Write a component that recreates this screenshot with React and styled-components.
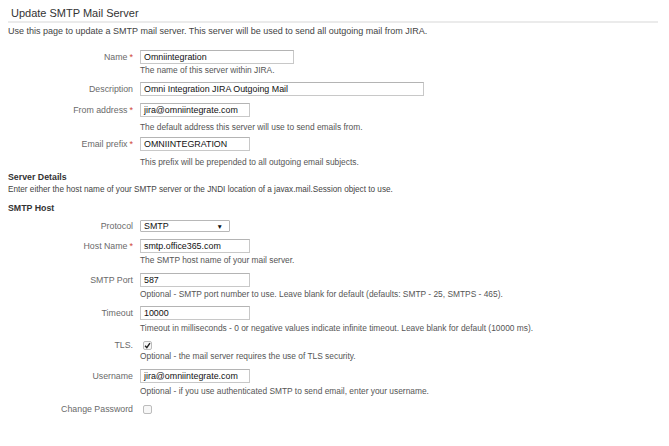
import React from 'react';
import styled, { createGlobalStyle } from 'styled-components';

const GlobalStyle = createGlobalStyle`
  html, body {
    margin: 0;
    padding: 0;
    background: #fff;
  }
  body {
    font-family: "Liberation Sans", Arial, sans-serif;
    color: #333;
  }
`;

const Page = styled.div`
  width: 669px;
  height: 446px;
  box-sizing: border-box;
  padding: 5px 11px 0 8px;
  overflow: hidden;
`;

const Title = styled.h2`
  margin: 0 0 0 3px;
  font-size: 11px;
  font-weight: normal;
  line-height: 16px;
  color: #333;
`;

const Rule = styled.div`
  height: 2px;
  background: #ebebeb;
`;

const Intro = styled.p`
  margin: 3px 0 0;
  font-size: 9px;
  line-height: 11px;
  color: #444;
  white-space: nowrap;
`;

const Row = styled.div`
  display: grid;
  grid-template-columns: 125px 1fr;
  column-gap: 7px;
  margin-top: ${(p) => p.$mt}px;
`;

const Label = styled.div`
  text-align: right;
  font-size: 8.8px;
  line-height: ${(p) => p.$lh || 14}px;
  color: #6a6a6a;
  white-space: nowrap;
`;

const Star = styled.span`
  color: #d04437;
  margin-left: 2px;
  font-size: 9px;
`;

const Field = styled.div`
  display: flex;
  flex-direction: column;
  align-items: flex-start;
`;

const Input = styled.div`
  box-sizing: border-box;
  width: ${(p) => p.$w}px;
  height: 14px;
  border: 1px solid #c8c8c8;
  border-top-color: #b4b4b4;
  background: #fff;
  padding: 0 3px;
  font-size: 8.9px;
  line-height: 12px;
  color: #111;
  white-space: nowrap;
  overflow: hidden;
`;

const Select = styled.div`
  box-sizing: border-box;
  width: 90px;
  height: 12px;
  border: 1px solid #b8b8b8;
  border-radius: 1px;
  background: #fff;
  padding: 0 3px;
  display: flex;
  align-items: center;
  justify-content: space-between;
  font-size: 8.9px;
  color: #111;
`;

const Arrow = styled.span`
  font-size: 6.5px;
  color: #111;
  margin-right: 3px;
`;

const Help = styled.div`
  margin-top: ${(p) => p.$mt}px;
  font-size: 8.4px;
  line-height: 10px;
  color: #555;
  white-space: nowrap;
`;

const Check = styled.span`
  box-sizing: border-box;
  display: inline-flex;
  align-items: center;
  justify-content: center;
  width: 9px;
  height: 9px;
  margin: 3px 0 0 3px;
  border: 1px solid #bcbcbc;
  border-radius: 2px;
  background: #f7f7f7;
`;

const Heading = styled.div`
  font-size: 8.8px;
  font-weight: bold;
  line-height: 11px;
  color: #333;
  margin-top: ${(p) => p.$mt}px;
`;

const Note = styled.div`
  font-size: 8.2px;
  line-height: 10px;
  color: #444;
  margin-top: 2px;
  white-space: nowrap;
`;

function CheckBox({ checked }) {
  return (
    <Check>
      {checked && (
        <svg width="7" height="7" viewBox="0 0 10 10">
          <path d="M1.5 5.5 L4 8 L8.5 1.5" fill="none" stroke="#222" strokeWidth="2" />
        </svg>
      )}
    </Check>
  );
}

function TextRow({ label, required, value, width, help, mt, helpMt }) {
  return (
    <Row $mt={mt}>
      <Label>
        {label}
        {required && <Star>*</Star>}
      </Label>
      <Field>
        <Input $w={width}>{value}</Input>
        {help && <Help $mt={helpMt}>{help}</Help>}
      </Field>
    </Row>
  );
}

export default function App() {
  return (
    <Page>
      <GlobalStyle />
      <Title>Update SMTP Mail Server</Title>
      <Rule />
      <Intro>
        Use this page to update a SMTP mail server. This server will be used to send all outgoing mail from JIRA.
      </Intro>

      <TextRow
        mt={13}
        label="Name"
        required
        value="Omniintegration"
        width={154}
        help="The name of this server within JIRA."
        helpMt={1}
      />
      <TextRow mt={7} label="Description" value="Omni Integration JIRA Outgoing Mail" width={284} />
      <TextRow
        mt={7}
        label="From address"
        required
        value="jira@omniintegrate.com"
        width={110}
        help="The default address this server will use to send emails from."
        helpMt={5}
      />
      <TextRow
        mt={5}
        label="Email prefix"
        required
        value="OMNIINTEGRATION"
        width={110}
        help="This prefix will be prepended to all outgoing email subjects."
        helpMt={6}
      />

      <Heading $mt={5}>Server Details</Heading>
      <Note>Enter either the host name of your SMTP server or the JNDI location of a javax.mail.Session object to use.</Note>
      <Heading $mt={8}>SMTP Host</Heading>

      <Row $mt={6}>
        <Label $lh={12}>Protocol</Label>
        <Field>
          <Select>
            <span>SMTP</span>
            <Arrow>▼</Arrow>
          </Select>
        </Field>
      </Row>
      <TextRow
        mt={7}
        label="Host Name"
        required
        value="smtp.office365.com"
        width={110}
        help="The SMTP host name of your mail server."
        helpMt={2}
      />
      <TextRow
        mt={8}
        label="SMTP Port"
        value="587"
        width={110}
        help="Optional - SMTP port number to use. Leave blank for default (defaults: SMTP - 25, SMTPS - 465)."
        helpMt={2}
      />
      <TextRow
        mt={7}
        label="Timeout"
        value="10000"
        width={110}
        help="Timeout in milliseconds - 0 or negative values indicate infinite timeout. Leave blank for default (10000 ms)."
        helpMt={3}
      />
      <Row $mt={5}>
        <Label>TLS.</Label>
        <Field>
          <CheckBox checked />
          <Help $mt={1}>Optional - the mail server requires the use of TLS security.</Help>
        </Field>
      </Row>
      <TextRow
        mt={8}
        label="Username"
        value="jira@omniintegrate.com"
        width={110}
        help="Optional - if you use authenticated SMTP to send email, enter your username."
        helpMt={3}
      />
      <Row $mt={6}>
        <Label>Change Password</Label>
        <Field>
          <CheckBox />
        </Field>
      </Row>
    </Page>
  );
}
